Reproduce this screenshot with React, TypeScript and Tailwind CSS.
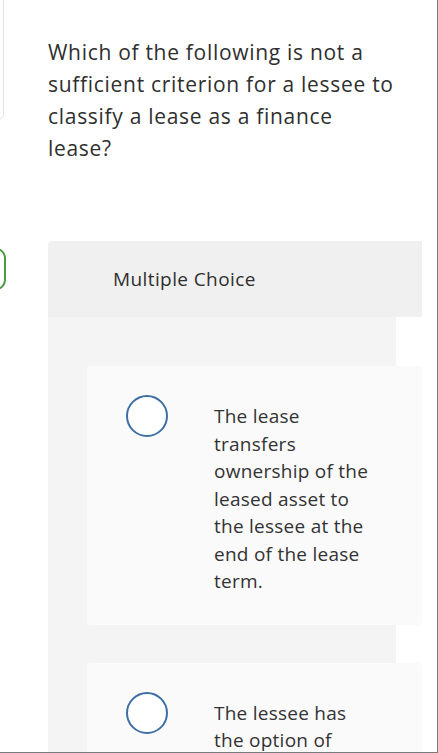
export default function App() {
  const font = { fontFamily: '"Open Sans", "Noto Sans", sans-serif' };

  return (
    <div
      className="relative w-[438px] h-[753px] overflow-hidden bg-white border-r border-b border-[#7a7a7a] text-[#2f2f2f]"
      style={font}
    >
      {/* side elements peeking in from the left */}
      <div className="absolute left-[-40px] top-[-10px] w-[44px] h-[130px] rounded-br-[6px] border border-[#e6e6e6] bg-white" />
      <div className="absolute left-[-40px] top-[248px] w-[46px] h-[42px] rounded-[10px] border-2 border-[#4a9a3f] bg-white" />

      <div className="pl-[48px] pt-[36px]">
        {/* Question */}
        <p className="w-[350px] text-[21px] leading-[32px] tracking-[0.7px]">
          Which of the following is not a sufficient criterion for a lessee to classify a lease as a finance lease?
        </p>

        {/* Multiple choice block */}
        <div className="mt-[77px] w-[374px]">
          <div className="h-[76px] flex items-center pl-[65px] bg-[#f0f0f0] rounded-tl-[4px] text-[19px] tracking-[0.4px]">
            Multiple Choice
          </div>

          <div className="w-[348px] bg-[#f4f4f4] pt-[49px] pb-[40px]">
            <Option text="The lease transfers ownership of the leased asset to the lessee at the end of the lease term." />
            <div className="h-[38px]" />
            <Option text="The lessee has the option of purchasing the asset at a price that is reasonably certain to be exercised." />
          </div>
        </div>
      </div>
    </div>
  );
}

function Option({ text }: { text: string }) {
  return (
    <div className="ml-[39px] w-[335px] flex bg-[#fafafa] rounded-[4px] pt-[29px] pb-[29px]">
      <div className="ml-[39px] w-[42px] h-[42px] shrink-0 rounded-full border-2 border-[#3d6fa5] bg-white" />
      <p className="ml-[46px] mt-[8px] w-[164px] text-[19px] leading-[27.5px] tracking-[0.25px] text-[#333]">
        {text}
      </p>
    </div>
  );
}
